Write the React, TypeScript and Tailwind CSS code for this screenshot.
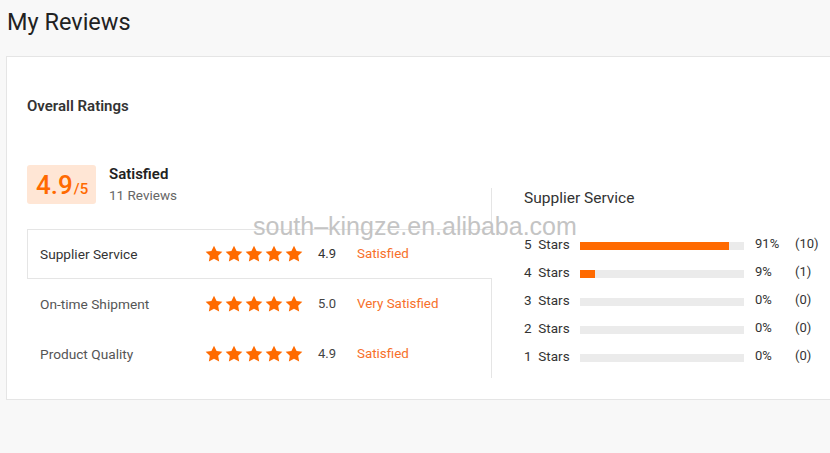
import React from "react";

const Star = () => (
  <svg viewBox="0 0 24 24" className="w-[20px] h-[20px] block" fill="#ff6a00">
    <polygon points="12,2 15.09,8.26 22,9.27 17,14.14 18.18,21.02 12,17.77 5.82,21.02 7,14.14 2,9.27 8.91,8.26" />
  </svg>
);

const Stars = () => (
  <div className="flex w-[100px]">
    <Star />
    <Star />
    <Star />
    <Star />
    <Star />
  </div>
);

const rows = [
  { label: "Supplier Service", score: "4.9", text: "Satisfied", active: true },
  { label: "On-time Shipment", score: "5.0", text: "Very Satisfied", active: false },
  { label: "Product Quality", score: "4.9", text: "Satisfied", active: false },
];

const bars = [
  { n: 5, pct: 91, count: 10 },
  { n: 4, pct: 9, count: 1 },
  { n: 3, pct: 0, count: 0 },
  { n: 2, pct: 0, count: 0 },
  { n: 1, pct: 0, count: 0 },
];

export default function App() {
  return (
    <div
      className="relative w-[830px] h-[453px] overflow-hidden bg-[#f8f8f8] text-[#333]"
      style={{ fontFamily: "Roboto, 'Open Sans', sans-serif" }}
    >
      <div className="h-[56px] pl-[7px] pt-[7px] text-[23.5px] leading-[30px] text-[#222]">My Reviews</div>

      <div className="ml-[6px] w-[900px] h-[344px] bg-white border border-[#e5e5e5]">
        <div className="pl-[20px] pt-[39px] text-[15px] leading-[20px] font-semibold text-[#333]">Overall Ratings</div>

        <div className="flex pl-[20px]">
          {/* left column */}
          <div className="w-[464px]">
            <div className="flex h-[39px] mt-[49px]">
              <div className="w-[69px] h-[39px] rounded-[3px] bg-[#ffe6d5] flex items-baseline pl-[9px] pt-[4px] text-[#ff6a00]">
                <span className="text-[26px] leading-[32px] font-medium">4.9</span>
                <span className="ml-[1px] text-[15px] font-medium">/5</span>
              </div>
              <div className="ml-[13px] -mt-[1px]">
                <div className="text-[15px] leading-[20px] font-semibold text-[#222]">Satisfied</div>
                <div className="text-[13.5px] leading-[22px] text-[#666]">11 Reviews</div>
              </div>
            </div>

            <div className="mt-[25px]">
              {rows.map((r) =>
                r.active ? (
                  <div
                    key={r.label}
                    className="relative z-10 w-[465px] h-[50px] bg-white border border-r-0 border-[#e5e5e5] flex items-center pl-[12px]"
                  >
                    <div className="w-[164px] text-[13.7px] text-[#333]">{r.label}</div>
                    <Stars />
                    <div className="ml-[14px] w-[39px] text-[13px] text-[#333]">{r.score}</div>
                    <div className="text-[13.4px] text-[#f7702a]">{r.text}</div>
                  </div>
                ) : (
                  <div key={r.label} className="h-[50px] flex items-center pl-[13px]">
                    <div className="w-[164px] text-[13.7px] text-[#555]">{r.label}</div>
                    <Stars />
                    <div className="ml-[14px] w-[39px] text-[13px] text-[#444]">{r.score}</div>
                    <div className="text-[13.4px] text-[#f7702a]">{r.text}</div>
                  </div>
                )
              )}
            </div>
          </div>

          {/* right column */}
          <div className="mt-[72px] h-[190px] border-l border-[#e5e5e5] pl-[32px]">
            <div className="text-[15.5px] leading-[20px] text-[#333]">Supplier Service</div>
            <div className="mt-[22px]">
              {bars.map((b) => (
                <div key={b.n} className="flex items-center h-[28px] text-[13px] text-[#333]">
                  <div className="w-[56px] text-[13.5px] whitespace-pre">{`${b.n}  Stars`}</div>
                  <div className="w-[164px] h-[8px] mt-[4px] bg-[#ebebeb]">
                    <div className="h-full bg-[#ff6a00]" style={{ width: `${b.pct}%` }} />
                  </div>
                  <div className="ml-[11px] w-[40px]">{b.pct}%</div>
                  <div>({b.count})</div>
                </div>
              ))}
            </div>
          </div>
        </div>
      </div>

      <div className="flex pl-[140px] pt-[50px] text-[14px] leading-[20px]">
        <span className="text-[#ff6a00]">Supplier Reviews</span>
        <span className="ml-[12px] text-[#999]">Product Reviews (8)</span>
      </div>

      <div
        className="absolute left-[253px] top-[214px] text-[25px] leading-[25px] text-[#c4c4c4] whitespace-nowrap pointer-events-none z-20"
        style={{ fontFamily: "'Liberation Sans', Arial, sans-serif" }}
      >
        south–kingze.en.alibaba.com
      </div>
    </div>
  );
}
